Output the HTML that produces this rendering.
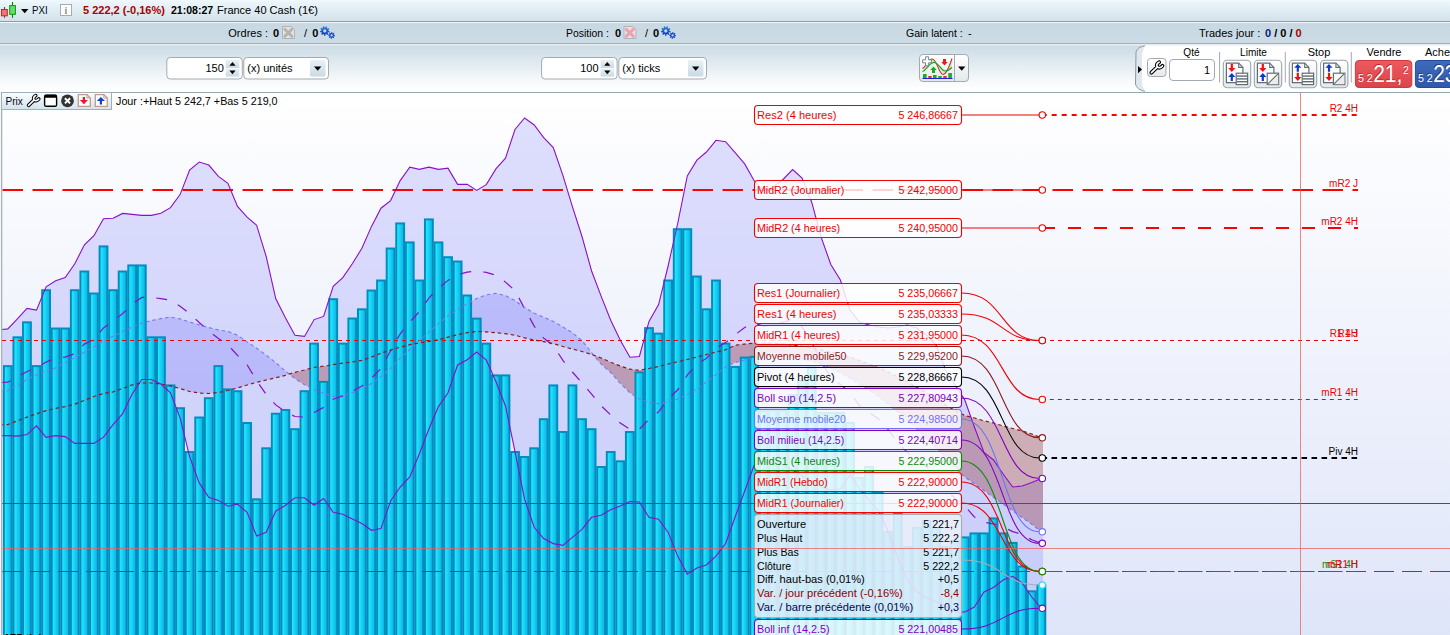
<!DOCTYPE html><html><head><meta charset="utf-8"><title>PXI</title>
<style>html,body{margin:0;padding:0;background:#fff}body{width:1450px;height:635px;overflow:hidden;font-family:'Liberation Sans', Arial, sans-serif}svg{display:block}text{font-family:'Liberation Sans', Arial, sans-serif}</style>
</head><body>
<svg width="1450" height="635" viewBox="0 0 1450 635" font-size="11">
<defs>
<linearGradient id="g1" x1="0" y1="0" x2="0" y2="1"><stop offset="0" stop-color="#eef8fd"/><stop offset="1" stop-color="#d2e1ea"/></linearGradient>
<linearGradient id="g2" x1="0" y1="0" x2="0" y2="1"><stop offset="0" stop-color="#c6d8e2"/><stop offset="1" stop-color="#ccdce6"/></linearGradient>
<linearGradient id="g3" x1="0" y1="0" x2="0" y2="1"><stop offset="0" stop-color="#cbdbe5"/><stop offset="0.75" stop-color="#f6f9fb"/><stop offset="1" stop-color="#ffffff"/></linearGradient>
<linearGradient id="gbg" x1="0" y1="0" x2="0" y2="1"><stop offset="0" stop-color="#ffffff"/><stop offset="1" stop-color="#dfe5f9"/></linearGradient>
<linearGradient id="gbar" x1="0" y1="0" x2="1" y2="0"><stop offset="0.1" stop-color="#22ecff"/><stop offset="0.9" stop-color="#0fb4e6"/></linearGradient>
<linearGradient id="gbtn" x1="0" y1="0" x2="0" y2="1"><stop offset="0" stop-color="#ffffff"/><stop offset="1" stop-color="#e4e9ec"/></linearGradient>
<linearGradient id="gtool" x1="0" y1="0" x2="0" y2="1"><stop offset="0" stop-color="#fbfdfe"/><stop offset="1" stop-color="#d3e3ec"/></linearGradient>
<linearGradient id="gsell" x1="0" y1="0" x2="0" y2="1"><stop offset="0" stop-color="#ee5a5e"/><stop offset="1" stop-color="#dc4449"/></linearGradient>
<linearGradient id="gbuy" x1="0" y1="0" x2="0" y2="1"><stop offset="0" stop-color="#3f6bbd"/><stop offset="1" stop-color="#2f58a8"/></linearGradient>
<linearGradient id="garrow" x1="0" y1="0" x2="0" y2="1"><stop offset="0" stop-color="#e9f1f6"/><stop offset="1" stop-color="#c9dae4"/></linearGradient>
<linearGradient id="ggear" x1="0" y1="0" x2="0" y2="1"><stop offset="0" stop-color="#2a80e4"/><stop offset="1" stop-color="#1030b0"/></linearGradient>
<clipPath id="chartclip"><rect x="2" y="93" width="1448" height="542"/></clipPath>
</defs>
<rect x="0" y="0" width="1450" height="21" fill="url(#g1)"/>
<rect x="0" y="21" width="1450" height="1" fill="#8f9aa1"/><rect x="0" y="22" width="1450" height="1" fill="#f4f8fa"/>
<rect x="0" y="23" width="1450" height="20.5" fill="url(#g2)"/>
<rect x="0" y="43.3" width="1450" height="1" fill="#8b969d"/><rect x="0" y="44.3" width="1450" height="1" fill="#eef3f6"/>
<rect x="0" y="45.3" width="1450" height="46.7" fill="url(#g3)"/>
<g><line x1="4.5" y1="7" x2="4.5" y2="17.8" stroke="#b82020" stroke-width="1.1"/><rect x="1.5" y="9.5" width="5.8" height="6.3" fill="#f27474" stroke="#c02828" stroke-width="1"/>
<line x1="12.5" y1="2" x2="12.5" y2="17.8" stroke="#108010" stroke-width="1.1"/><rect x="9.7" y="5.6" width="5.7" height="8.7" fill="#62e062" stroke="#149014" stroke-width="1"/></g>
<path d="M21,9 L28.4,9 L24.7,13.2 Z" fill="#000"/>
<text x="32" y="14.3" font-size="11" fill="#000820" textLength="15.6" lengthAdjust="spacingAndGlyphs">PXI</text>
<rect x="60.5" y="4.5" width="11" height="11" fill="#fff" stroke="#a9adb0" stroke-width="1"/>
<text x="66" y="13.6" font-size="10" font-weight="bold" text-anchor="middle" fill="#8a8f94" style="font-family:'Liberation Serif',serif">i</text>
<text x="83" y="14.3" font-size="11" font-weight="bold" fill="#a80000">5 222,2 (-0,16%)</text>
<text x="171" y="14.3" font-size="11" font-weight="bold" fill="#000" textLength="42.2" lengthAdjust="spacingAndGlyphs">21:08:27</text>
<text x="217" y="14.3" font-size="11" fill="#000">France 40 Cash (1€)</text>
<text x="228.3" y="37" font-size="11" fill="#000">Ordres :</text><text x="273" y="37" font-size="11" font-weight="bold" fill="#000">0</text>
<g><path d="M282.5,26.5 h9 l3,3 v9 h-12 z" fill="#e5e3df" stroke="#b6b3b0" stroke-width="1"/><path d="M284.8,29.3 l7,7 M291.8,29.3 l-7,7" stroke="#b4b4b4" stroke-width="3" stroke-linecap="round"/></g>
<text x="304" y="37" font-size="11" fill="#000">/</text><text x="312.2" y="37" font-size="11" font-weight="bold" fill="#000">0</text>
<path fill-rule="evenodd" fill="url(#ggear)" d="M329.59,31.12 L329.30,32.56 L328.01,32.29 L327.50,33.12 L328.33,34.15 L327.18,35.07 L326.36,34.03 L325.44,34.34 L325.41,35.66 L323.95,35.62 L323.99,34.30 L323.08,33.95 L322.21,34.94 L321.11,33.97 L321.99,32.98 L321.52,32.13 L320.22,32.33 L320.00,30.88 L321.31,30.69 L321.50,29.73 L320.37,29.05 L321.14,27.80 L322.26,28.49 L323.02,27.89 L322.60,26.64 L323.99,26.17 L324.40,27.42 L325.38,27.45 L325.85,26.22 L327.22,26.75 L326.73,27.98 L327.46,28.63 L328.62,27.99 L329.32,29.28 L328.16,29.90 L328.30,30.87 Z M323.20,30.90 a1.60,1.60 0 1,0 3.20,0 a1.60,1.60 0 1,0 -3.20,0 Z"/><path fill-rule="evenodd" fill="#1848c8" d="M334.99,35.15 L334.87,36.32 L333.87,36.19 L333.51,36.85 L334.17,37.62 L333.27,38.36 L332.64,37.56 L331.92,37.78 L331.85,38.79 L330.68,38.67 L330.81,37.67 L330.15,37.31 L329.38,37.97 L328.64,37.07 L329.44,36.44 L329.22,35.72 L328.21,35.65 L328.33,34.48 L329.33,34.61 L329.69,33.95 L329.03,33.18 L329.93,32.44 L330.56,33.24 L331.28,33.02 L331.35,32.01 L332.52,32.13 L332.39,33.13 L333.05,33.49 L333.82,32.83 L334.56,33.73 L333.76,34.36 L333.98,35.08 Z M330.45,35.40 a1.15,1.15 0 1,0 2.30,0 a1.15,1.15 0 1,0 -2.30,0 Z"/>
<text x="566" y="37" font-size="11" fill="#000" textLength="42.8" lengthAdjust="spacingAndGlyphs">Position :</text><text x="615" y="37" font-size="11" font-weight="bold" fill="#000">0</text>
<g><path d="M624,26.5 h9 l3,3 v9 h-12 z" fill="#dde4ea" stroke="#b6b3b0" stroke-width="1"/><path d="M626.3,29.3 l7,7 M633.3,29.3 l-7,7" stroke="#f0a0ac" stroke-width="3" stroke-linecap="round"/></g>
<text x="645" y="37" font-size="11" fill="#000">/</text><text x="653" y="37" font-size="11" font-weight="bold" fill="#000">0</text>
<path fill-rule="evenodd" fill="url(#ggear)" d="M670.59,31.12 L670.30,32.56 L669.01,32.29 L668.50,33.12 L669.33,34.15 L668.18,35.07 L667.36,34.03 L666.44,34.34 L666.41,35.66 L664.95,35.62 L664.99,34.30 L664.08,33.95 L663.21,34.94 L662.11,33.97 L662.99,32.98 L662.52,32.13 L661.22,32.33 L661.00,30.88 L662.31,30.69 L662.50,29.73 L661.37,29.05 L662.14,27.80 L663.26,28.49 L664.02,27.89 L663.60,26.64 L664.99,26.17 L665.40,27.42 L666.38,27.45 L666.85,26.22 L668.22,26.75 L667.73,27.98 L668.46,28.63 L669.62,27.99 L670.32,29.28 L669.16,29.90 L669.30,30.87 Z M664.20,30.90 a1.60,1.60 0 1,0 3.20,0 a1.60,1.60 0 1,0 -3.20,0 Z"/><path fill-rule="evenodd" fill="#1848c8" d="M675.99,35.15 L675.87,36.32 L674.87,36.19 L674.51,36.85 L675.17,37.62 L674.27,38.36 L673.64,37.56 L672.92,37.78 L672.85,38.79 L671.68,38.67 L671.81,37.67 L671.15,37.31 L670.38,37.97 L669.64,37.07 L670.44,36.44 L670.22,35.72 L669.21,35.65 L669.33,34.48 L670.33,34.61 L670.69,33.95 L670.03,33.18 L670.93,32.44 L671.56,33.24 L672.28,33.02 L672.35,32.01 L673.52,32.13 L673.39,33.13 L674.05,33.49 L674.82,32.83 L675.56,33.73 L674.76,34.36 L674.98,35.08 Z M671.45,35.40 a1.15,1.15 0 1,0 2.30,0 a1.15,1.15 0 1,0 -2.30,0 Z"/>
<text x="906" y="37" font-size="11" fill="#000" textLength="56.7" lengthAdjust="spacingAndGlyphs">Gain latent :</text><text x="968" y="37" font-size="11" fill="#000">-</text>
<text x="1199" y="37" font-size="11" fill="#000">Trades jour :</text>
<text x="1265" y="37" font-size="11" font-weight="bold"><tspan fill="#0a1a78">0</tspan><tspan fill="#000"> / </tspan><tspan fill="#000">0</tspan><tspan fill="#000"> / </tspan><tspan fill="#a80000">0</tspan></text>
<rect x="166.8" y="57.5" width="75.5" height="21.5" rx="3.5" fill="#fff" stroke="#a2abb2" stroke-width="1"/><text x="223.8" y="72.3" font-size="11" text-anchor="end" fill="#000">150</text><rect x="225.8" y="60" width="13.5" height="8" fill="url(#garrow)"/><rect x="225.8" y="68.6" width="13.5" height="8" fill="url(#garrow)"/><path d="M229.4,65.7 l3.1,-3.6 l3.1,3.6 z M229.4,70.6 l3.1,3.6 l3.1,-3.6 z" fill="#000"/>
<rect x="243.8" y="57.5" width="84.7" height="21.5" rx="3.5" fill="#fff" stroke="#a2abb2" stroke-width="1"/><text x="247.3" y="72.3" font-size="11" fill="#000">(x) unités</text><rect x="310" y="60" width="15.5" height="16.5" rx="1.5" fill="url(#garrow)"/><path d="M314,66.5 h7.4 l-3.7,4.2 z" fill="#000"/>
<rect x="541.6" y="57.5" width="75.5" height="21.5" rx="3.5" fill="#fff" stroke="#a2abb2" stroke-width="1"/><text x="598.6" y="72.3" font-size="11" text-anchor="end" fill="#000">100</text><rect x="600.6" y="60" width="13.5" height="8" fill="url(#garrow)"/><rect x="600.6" y="68.6" width="13.5" height="8" fill="url(#garrow)"/><path d="M604.2,65.7 l3.1,-3.6 l3.1,3.6 z M604.2,70.6 l3.1,3.6 l3.1,-3.6 z" fill="#000"/>
<rect x="618.8" y="57.5" width="87.7" height="21.5" rx="3.5" fill="#fff" stroke="#a2abb2" stroke-width="1"/><text x="622.3" y="72.3" font-size="11" fill="#000">(x) ticks</text><rect x="688" y="60" width="15.5" height="16.5" rx="1.5" fill="url(#garrow)"/><path d="M692,66.5 h7.4 l-3.7,4.2 z" fill="#000"/>
<rect x="919.5" y="54.5" width="49" height="27" rx="3.5" fill="url(#gbtn)" stroke="#a2abb2"/><line x1="954.5" y1="55" x2="954.5" y2="81" stroke="#a2abb2"/>
<path d="M958,66.5 h7.4 l-3.7,4.2 z" fill="#000"/>
<g>
<path d="M922.5,70 C927,66 929,60 933,60 C938,60 940,74 944,74 C948,74 950,64 952,59 L952,68 C949,72 947,71 945,70 C940,66 938,62 933,64 C929,66 927,70 922.5,70 Z" fill="#c8ecc8" opacity="0.9"/>
<path d="M922.5,68.5 C926,67 928,59 932,59 C937,59 939,74.5 943,74.5 C947,74.5 950,64 952,58.5" fill="none" stroke="#d02828" stroke-width="1.1"/>
<path d="M922.5,71.5 C927,70 929,62.5 934,62.5 C939,62.5 941,71 945,71 C948,71 950,69.5 952,67.5" fill="none" stroke="#18a018" stroke-width="1.1"/>
<path d="M925.6,56.8 h3 v3 h3 v3 h-3 v3 h-3 v-3 h-3 v-3 h3 z" fill="#fff" stroke="#6f7a80" stroke-width="0.9"/>
<path d="M943,59 h3 v3 h1.8 l-3.3,3.4 l-3.3,-3.4 h1.8 z" fill="#e02020"/>
<path d="M932,73 v-3 h-1.8 l3.3,-3.4 l3.3,3.4 h-1.8 v3 z" fill="#18b018"/>
<rect x="923" y="74" width="3.6" height="4" fill="#18b018"/><rect x="928.3" y="76" width="3.4" height="2" fill="#e03030"/><rect x="933" y="75" width="3.6" height="3" fill="#18b018"/><rect x="938.3" y="76" width="3.4" height="2" fill="#18b018"/><rect x="943.3" y="76" width="3.4" height="2" fill="#e03030"/><rect x="948.3" y="73" width="3.6" height="5" fill="#18b018"/>
<line x1="922.5" y1="78.5" x2="952.5" y2="78.5" stroke="#2020e0" stroke-width="1"/>
</g>
<path d="M1450,45.5 L1145,45.5 C1140,46 1137,48 1136,52 L1135.5,84 C1137,88 1140,90.5 1145,91.5 L1450,91.5 Z" fill="#fff"/>
<path d="M1145,45.8 C1140,46.5 1136.8,48.5 1136,52.5 L1135.5,84 C1136.5,88 1140,90.5 1145,91.3" fill="#dfe8ee" stroke="#8b969d" stroke-width="1"/>
<path d="M1145,45.8 C1142.5,50 1142,54 1142,58 L1142,80 C1142,84 1142.5,87 1145,91.3 L1450,91.3 L1450,45.8 Z" fill="#fff"/>
<path d="M1138,66 l4,3.6 l-4,3.6 z" fill="#000"/>
<rect x="1147.5" y="58.5" width="18.5" height="18" rx="3" fill="url(#gbtn)" stroke="#a2abb2"/>
<g transform="translate(1149.5,60.3) scale(1)" fill="none" stroke-linecap="round" stroke-linejoin="round"><path d="M1.9,12.4 L7.9,6.5 M9.6,1.9 C7.4,2.9 6.6,5.2 7.9,6.6 C9.2,8 11.5,7.4 12.9,5.6" stroke="#000" stroke-width="3.9"/><path d="M1.9,12.4 L7.9,6.5 M9.6,1.9 C7.4,2.9 6.6,5.2 7.9,6.6 C9.2,8 11.5,7.4 12.9,5.6" stroke="#fff" stroke-width="1.7"/></g>
<text x="1191.5" y="56.3" font-size="11" text-anchor="middle" fill="#000" textLength="16.3" lengthAdjust="spacingAndGlyphs">Qté</text>
<rect x="1169.5" y="59.5" width="45" height="21" rx="3.5" fill="#fff" stroke="#a2abb2"/><text x="1210" y="73.6" font-size="11" text-anchor="end" fill="#000">1</text>
<line x1="1219.6" y1="52" x2="1219.6" y2="82.5" stroke="#a2abb2" stroke-width="1"/>
<line x1="1285.3" y1="52" x2="1285.3" y2="82.5" stroke="#a2abb2" stroke-width="1"/>
<line x1="1351.3" y1="52" x2="1351.3" y2="82.5" stroke="#a2abb2" stroke-width="1"/>
<text x="1253.5" y="56.3" font-size="11" text-anchor="middle" fill="#000" textLength="26.8" lengthAdjust="spacingAndGlyphs">Limite</text>
<text x="1319" y="56.3" font-size="11" text-anchor="middle" fill="#000">Stop</text>
<text x="1384" y="56.3" font-size="11" text-anchor="middle" fill="#000">Vendre</text>
<text x="1425" y="56.3" font-size="11" fill="#000">Acheter</text>
<rect x="1223.3" y="60.3" width="27.4" height="27.4" rx="4" fill="url(#gbtn)" stroke="#9aa5ac" stroke-width="1.1"/><path d="M1226.4,63.2 h12.3 l4.2,4.2 v15.3 h-16.5 z" fill="#fff" stroke="#626d72" stroke-width="1.2"/><path d="M1238.7,63.2 v4.2 h4.2" fill="none" stroke="#626d72" stroke-width="1.1"/><path d="M1230.7,63.9 h2.2 v4.2 h2.5 l-3.6,4 l-3.6,-4 h2.5 z" fill="#f01010"/><path d="M1231.8,73.1 l3.6,3.9 h-2.5 v4 h-2.2 v-4 h-2.5 z" fill="#0a3cc8"/><rect x="1236.2" y="73.2" width="11.4" height="11.4" fill="#fff" stroke="#626d72" stroke-width="1.2"/><rect x="1236.7" y="75.4" width="10.4" height="1.4" fill="#626d72"/><rect x="1236.7" y="78.2" width="10.4" height="1.4" fill="#626d72"/><rect x="1236.7" y="81" width="10.4" height="1.4" fill="#626d72"/>
<rect x="1254.3" y="60.3" width="27.4" height="27.4" rx="4" fill="url(#gbtn)" stroke="#9aa5ac" stroke-width="1.1"/><path d="M1257.4,63.2 h12.3 l4.2,4.2 v15.3 h-16.5 z" fill="#fff" stroke="#626d72" stroke-width="1.2"/><path d="M1269.7,63.2 v4.2 h4.2" fill="none" stroke="#626d72" stroke-width="1.1"/><path d="M1261.7,63.9 h2.2 v4.2 h2.5 l-3.6,4 l-3.6,-4 h2.5 z" fill="#f01010"/><path d="M1262.8,73.1 l3.6,3.9 h-2.5 v4 h-2.2 v-4 h-2.5 z" fill="#0a3cc8"/><rect x="1267.2" y="73.2" width="11.4" height="11.4" fill="#fafafa" stroke="#626d72" stroke-width="1.2"/><path d="M1278.2,73.6 l-10.6,10.6 h10.6 z" fill="#ececec"/><line x1="1278.2" y1="73.6" x2="1267.6" y2="84.2" stroke="#626d72" stroke-width="1.1"/>
<rect x="1289.3" y="60.3" width="27.4" height="27.4" rx="4" fill="url(#gbtn)" stroke="#9aa5ac" stroke-width="1.1"/><path d="M1292.4,63.2 h12.3 l4.2,4.2 v15.3 h-16.5 z" fill="#fff" stroke="#626d72" stroke-width="1.2"/><path d="M1304.7,63.2 v4.2 h4.2" fill="none" stroke="#626d72" stroke-width="1.1"/><path d="M1297.8,63.9 l3.6,3.9 h-2.5 v4 h-2.2 v-4 h-2.5 z" fill="#0a3cc8"/><path d="M1296.7,72.7 h2.2 v4.2 h2.5 l-3.6,4 l-3.6,-4 h2.5 z" fill="#f01010"/><rect x="1302.2" y="73.2" width="11.4" height="11.4" fill="#fff" stroke="#626d72" stroke-width="1.2"/><rect x="1302.7" y="75.4" width="10.4" height="1.4" fill="#626d72"/><rect x="1302.7" y="78.2" width="10.4" height="1.4" fill="#626d72"/><rect x="1302.7" y="81" width="10.4" height="1.4" fill="#626d72"/>
<rect x="1320.5" y="60.3" width="27.4" height="27.4" rx="4" fill="url(#gbtn)" stroke="#9aa5ac" stroke-width="1.1"/><path d="M1323.6,63.2 h12.3 l4.2,4.2 v15.3 h-16.5 z" fill="#fff" stroke="#626d72" stroke-width="1.2"/><path d="M1335.9,63.2 v4.2 h4.2" fill="none" stroke="#626d72" stroke-width="1.1"/><path d="M1329,63.9 l3.6,3.9 h-2.5 v4 h-2.2 v-4 h-2.5 z" fill="#0a3cc8"/><path d="M1327.9,72.7 h2.2 v4.2 h2.5 l-3.6,4 l-3.6,-4 h2.5 z" fill="#f01010"/><rect x="1333.4" y="73.2" width="11.4" height="11.4" fill="#fafafa" stroke="#626d72" stroke-width="1.2"/><path d="M1344.4,73.6 l-10.6,10.6 h10.6 z" fill="#ececec"/><line x1="1344.4" y1="73.6" x2="1333.8" y2="84.2" stroke="#626d72" stroke-width="1.1"/>
<rect x="1355.4" y="60.5" width="56.4" height="27" rx="3.5" fill="url(#gsell)" stroke="#cc3a42" stroke-width="1"/>
<g fill="#a81820" opacity="0.7" transform="translate(-0.7,-0.7)"><text x="1358" y="81.9" font-size="11.5" textLength="14.8" lengthAdjust="spacingAndGlyphs">5 2</text><text x="1373.2" y="82" font-size="23.6" textLength="29" lengthAdjust="spacingAndGlyphs">21,</text><text x="1402.9" y="73.9" font-size="11.2" textLength="5.7" lengthAdjust="spacingAndGlyphs">2</text></g><g fill="#fff" opacity="1" transform="translate(0,0)"><text x="1358" y="81.9" font-size="11.5" textLength="14.8" lengthAdjust="spacingAndGlyphs">5 2</text><text x="1373.2" y="82" font-size="23.6" textLength="29" lengthAdjust="spacingAndGlyphs">21,</text><text x="1402.9" y="73.9" font-size="11.2" textLength="5.7" lengthAdjust="spacingAndGlyphs">2</text></g>
<rect x="1415.4" y="60.5" width="56.4" height="27" rx="3.5" fill="url(#gbuy)" stroke="#284c98" stroke-width="1"/>
<g fill="#18306c" opacity="0.7" transform="translate(-0.7,-0.7)"><text x="1418" y="81.9" font-size="11.5" textLength="14.8" lengthAdjust="spacingAndGlyphs">5 2</text><text x="1433.2" y="82" font-size="23.6" textLength="29" lengthAdjust="spacingAndGlyphs">23,</text></g><g fill="#fff" opacity="1" transform="translate(0,0)"><text x="1418" y="81.9" font-size="11.5" textLength="14.8" lengthAdjust="spacingAndGlyphs">5 2</text><text x="1433.2" y="82" font-size="23.6" textLength="29" lengthAdjust="spacingAndGlyphs">23,</text></g>
<rect x="0" y="92" width="1450" height="543" fill="url(#gbg)"/>
<g clip-path="url(#chartclip)">
<polygon points="0.0,329.7 7.8,328.9 17.4,318.9 27.0,308.4 36.5,310.1 46.1,286.8 55.7,280.8 65.2,277.6 74.8,263.8 84.4,244.8 93.9,235.7 103.5,218.7 113.1,218.2 122.7,213.4 132.2,214.4 141.8,215.4 151.4,215.4 160.9,213.2 170.5,207.7 180.1,194.6 189.6,170.1 199.2,162.1 208.8,165.1 218.4,176.4 227.9,183.4 237.5,206.4 247.1,217.2 256.6,225.2 266.2,256.5 275.8,298.8 285.3,317.6 294.9,335.2 304.5,336.4 314.1,319.6 323.6,316.4 333.2,286.3 342.8,277.6 352.3,263.8 361.9,248.3 371.5,226.4 381.0,208.2 390.6,200.6 400.2,180.6 409.8,167.1 419.3,169.4 428.9,167.1 438.5,169.4 448.0,168.1 457.6,184.4 467.2,184.4 476.7,190.4 486.3,184.6 495.9,168.9 505.5,158.1 515.0,129.5 524.6,118.0 534.2,125.0 543.7,137.6 553.3,147.6 562.9,175.4 572.4,206.7 582.0,236.5 591.6,271.0 601.2,296.4 610.7,320.2 620.3,340.2 629.9,357.2 639.4,356.5 649.0,321.4 658.6,304.6 668.1,266.0 677.7,223.5 687.3,176.0 696.9,160.1 706.4,152.0 716.0,140.3 725.6,141.7 735.1,152.6 744.7,163.9 754.3,180.9 763.8,190.8 773.4,186.6 783.0,179.5 792.6,169.6 802.1,178.1 811.7,202.2 821.3,237.6 830.8,264.5 840.4,280.0 850.0,310.0 859.5,322.0 869.1,325.0 878.7,327.0 888.3,328.0 897.8,327.0 907.4,325.0 917.0,328.0 926.5,335.0 936.1,345.0 945.7,370.0 955.2,385.0 964.8,400.0 974.4,427.0 984.0,452.5 993.5,460.0 1003.1,474.0 1012.7,487.0 1022.2,486.0 1031.8,482.5 1041.4,478.5 1043.0,478.5 1043.0,608.3 1041.4,608.3 1031.8,597.0 1022.2,583.0 1012.7,576.3 1003.1,580.0 993.5,587.5 984.0,592.0 974.4,607.0 964.8,612.0 955.2,612.0 945.7,606.0 936.1,601.5 926.5,598.0 917.0,592.0 907.4,580.0 897.8,558.0 888.3,532.0 878.7,511.0 869.1,500.0 859.5,489.0 850.0,475.0 840.4,489.0 830.8,490.0 821.3,487.0 811.7,482.0 802.1,476.0 792.6,470.0 783.0,465.0 773.4,462.0 763.8,462.0 754.3,465.0 744.7,491.0 735.1,517.0 725.6,543.5 716.0,556.1 706.4,564.9 696.9,568.1 687.3,574.1 677.7,556.1 668.1,532.3 658.6,519.3 649.0,517.3 639.4,502.0 629.9,501.5 620.3,506.0 610.7,509.8 601.2,515.3 591.6,517.3 582.0,529.3 572.4,537.3 562.9,545.4 553.3,543.6 543.7,538.6 534.2,527.3 524.6,499.2 515.0,451.6 505.5,406.0 495.9,381.5 486.3,360.2 476.7,352.0 467.2,359.7 457.6,365.0 448.0,392.8 438.5,406.6 428.9,429.0 419.3,454.0 409.8,477.0 400.2,487.0 390.6,501.0 381.0,528.6 371.5,530.3 361.9,523.6 352.3,519.0 342.8,514.3 333.2,512.3 323.6,498.5 314.1,505.3 304.5,497.8 294.9,497.8 285.3,505.5 275.8,511.0 266.2,532.3 256.6,536.0 247.1,512.3 237.5,504.2 227.9,506.2 218.4,500.4 208.8,497.2 199.2,482.9 189.6,456.6 180.1,417.8 170.5,392.8 160.9,384.0 151.4,379.5 141.8,379.5 132.2,394.0 122.7,413.6 113.1,424.6 103.5,437.1 93.9,443.4 84.4,443.4 74.8,443.4 65.2,436.6 55.7,435.6 46.1,437.4 36.5,425.8 27.0,434.6 17.4,436.1 7.8,435.6 0.0,435.6" fill="#6464f8" fill-opacity="0.2"/>
<polygon points="0.0,391.1 7.8,390.7 17.4,385.2 27.0,379.5 36.5,374.7 46.1,371.5 55.7,367.7 65.2,362.7 74.8,357.7 84.4,352.2 93.9,346.9 103.5,341.4 113.1,336.2 122.7,331.4 132.2,327.1 141.8,323.1 151.4,320.6 160.9,318.6 170.5,317.1 180.1,318.9 189.6,321.9 199.2,324.9 208.8,327.6 218.4,329.9 227.9,331.4 237.5,335.2 247.1,341.9 256.6,348.2 266.2,355.2 275.8,362.7 285.3,371.0 289.3,374.1 289.3,374.1 285.3,375.3 275.8,377.8 266.2,380.0 256.6,382.3 247.1,385.0 237.5,388.0 227.9,390.5 218.4,392.5 208.8,393.5 199.2,393.0 189.6,391.5 180.1,388.5 170.5,386.0 160.9,384.0 151.4,383.0 141.8,383.0 132.2,384.8 122.7,388.5 113.1,391.8 103.5,393.5 93.9,396.5 84.4,400.3 74.8,404.1 65.2,406.6 55.7,408.3 46.1,410.6 36.5,413.8 27.0,417.1 17.4,420.8 7.8,424.6 0.0,424.9" fill="#6464f8" fill-opacity="0.24"/>
<polygon points="289.3,374.1 294.9,378.5 304.5,384.7 314.1,389.3 323.6,393.5 333.2,396.5 342.8,395.3 352.3,392.8 361.9,388.3 371.5,383.5 381.0,376.5 390.6,368.5 400.2,358.2 409.8,349.5 416.2,343.6 416.2,343.6 409.8,344.7 400.2,347.2 390.6,350.0 381.0,353.2 371.5,357.0 361.9,360.4 352.3,361.9 342.8,363.2 333.2,364.7 323.6,366.2 314.1,367.4 304.5,370.0 294.9,372.3 289.3,374.1" fill="#8c1818" fill-opacity="0.3"/>
<polygon points="416.2,343.6 419.3,340.7 428.9,332.2 438.5,323.7 448.0,315.9 457.6,309.6 467.2,303.6 476.7,298.4 486.3,294.9 495.9,293.4 505.5,295.6 515.0,300.6 524.6,307.6 534.2,313.2 543.7,317.2 553.3,321.4 562.9,326.9 572.4,332.7 582.0,340.7 591.6,352.7 593.7,355.3 593.7,355.3 591.6,354.5 582.0,351.5 572.4,349.0 562.9,346.5 553.3,343.5 543.7,341.7 534.2,340.0 524.6,337.9 515.0,335.2 505.5,333.7 495.9,332.7 486.3,331.9 476.7,331.4 467.2,332.7 457.6,334.7 448.0,337.2 438.5,339.7 428.9,341.4 419.3,343.0 416.2,343.6" fill="#6464f8" fill-opacity="0.24"/>
<polygon points="593.7,355.3 601.2,364.2 610.7,372.5 620.3,383.3 629.9,392.8 639.4,399.0 649.0,402.3 658.6,403.6 668.1,402.0 677.7,399.0 687.3,394.5 696.9,389.0 706.4,382.0 716.0,374.5 725.6,367.0 735.1,362.5 744.7,360.0 754.3,358.0 763.8,356.5 773.4,356.0 783.0,356.0 792.6,357.0 802.1,359.0 811.7,361.0 821.3,364.0 830.8,368.0 840.4,373.0 850.0,378.0 859.5,384.0 869.1,390.0 878.7,397.0 888.3,404.0 897.8,412.0 907.4,420.0 917.0,429.0 926.5,438.0 936.1,448.0 945.7,458.0 955.2,468.0 964.8,477.0 974.4,483.8 984.0,490.5 993.5,497.3 1003.1,504.0 1012.7,510.8 1022.2,517.5 1031.8,524.3 1041.4,531.8 1043.0,531.8 1043.0,437.8 1041.4,437.8 1031.8,434.0 1022.2,431.0 1012.7,428.5 1003.1,426.0 993.5,423.0 984.0,420.8 974.4,418.0 964.8,415.5 955.2,410.5 945.7,405.0 936.1,399.0 926.5,393.0 917.0,387.5 907.4,382.0 897.8,377.0 888.3,372.0 878.7,368.0 869.1,364.0 859.5,360.5 850.0,357.0 840.4,354.5 830.8,352.0 821.3,350.0 811.7,348.0 802.1,346.5 792.6,345.0 783.0,344.0 773.4,343.0 763.8,343.0 754.3,343.1 744.7,344.1 735.1,345.3 725.6,349.7 716.0,352.0 706.4,354.5 696.9,357.0 687.3,359.5 677.7,361.7 668.1,364.0 658.6,366.5 649.0,368.5 639.4,370.3 629.9,369.2 620.3,366.0 610.7,362.2 601.2,358.0 593.7,355.3" fill="#8c1818" fill-opacity="0.3"/>
<g fill="url(#gbar)" stroke="#008cbe" stroke-width="1.95"><rect x="3.88" y="366.1" width="7.87" height="274.8"/><rect x="13.45" y="337.3" width="7.87" height="303.6"/><rect x="23.02" y="322.3" width="7.87" height="318.6"/><rect x="32.59" y="366.1" width="7.87" height="274.8"/><rect x="42.16" y="290.2" width="7.87" height="350.7"/><rect x="51.73" y="328.5" width="7.87" height="312.4"/><rect x="61.30" y="328.5" width="7.87" height="312.4"/><rect x="70.87" y="290.2" width="7.87" height="350.7"/><rect x="80.44" y="271.5" width="7.87" height="369.4"/><rect x="90.01" y="293.5" width="7.87" height="347.4"/><rect x="99.58" y="246.4" width="7.87" height="394.5"/><rect x="109.15" y="290.2" width="7.87" height="350.7"/><rect x="118.72" y="271.5" width="7.87" height="369.4"/><rect x="128.29" y="265.4" width="7.87" height="375.5"/><rect x="137.86" y="265.4" width="7.87" height="375.5"/><rect x="147.43" y="337.3" width="7.87" height="303.6"/><rect x="157.00" y="337.3" width="7.87" height="303.6"/><rect x="166.57" y="385.4" width="7.87" height="255.5"/><rect x="176.14" y="408.2" width="7.87" height="232.7"/><rect x="185.71" y="452.0" width="7.87" height="188.9"/><rect x="195.28" y="417.5" width="7.87" height="223.4"/><rect x="204.85" y="398.2" width="7.87" height="242.7"/><rect x="214.42" y="366.1" width="7.87" height="274.8"/><rect x="223.99" y="389.4" width="7.87" height="251.5"/><rect x="233.56" y="391.2" width="7.87" height="249.7"/><rect x="243.13" y="423.0" width="7.87" height="217.9"/><rect x="252.70" y="499.3" width="7.87" height="141.6"/><rect x="262.27" y="448.3" width="7.87" height="192.6"/><rect x="271.84" y="413.7" width="7.87" height="227.2"/><rect x="281.41" y="410.0" width="7.87" height="230.9"/><rect x="290.98" y="429.2" width="7.87" height="211.7"/><rect x="300.55" y="391.2" width="7.87" height="249.7"/><rect x="310.12" y="343.6" width="7.87" height="297.3"/><rect x="319.69" y="381.9" width="7.87" height="259.0"/><rect x="329.26" y="299.2" width="7.87" height="341.7"/><rect x="338.83" y="343.6" width="7.87" height="297.3"/><rect x="348.40" y="318.5" width="7.87" height="322.4"/><rect x="357.97" y="309.3" width="7.87" height="331.6"/><rect x="367.54" y="290.5" width="7.87" height="350.4"/><rect x="377.11" y="280.5" width="7.87" height="360.4"/><rect x="386.68" y="248.5" width="7.87" height="392.4"/><rect x="396.25" y="223.4" width="7.87" height="417.5"/><rect x="405.82" y="242.4" width="7.87" height="398.5"/><rect x="415.39" y="280.5" width="7.87" height="360.4"/><rect x="424.96" y="219.4" width="7.87" height="421.5"/><rect x="434.53" y="242.4" width="7.87" height="398.5"/><rect x="444.10" y="257.2" width="7.87" height="383.7"/><rect x="453.67" y="261.5" width="7.87" height="379.4"/><rect x="463.24" y="295.5" width="7.87" height="345.4"/><rect x="472.81" y="318.6" width="7.87" height="322.3"/><rect x="482.38" y="343.6" width="7.87" height="297.3"/><rect x="491.95" y="375.4" width="7.87" height="265.5"/><rect x="501.52" y="375.4" width="7.87" height="265.5"/><rect x="511.09" y="452.0" width="7.87" height="188.9"/><rect x="520.66" y="457.0" width="7.87" height="183.9"/><rect x="530.23" y="448.3" width="7.87" height="192.6"/><rect x="539.80" y="419.2" width="7.87" height="221.7"/><rect x="549.37" y="385.4" width="7.87" height="255.5"/><rect x="558.94" y="432.0" width="7.87" height="208.9"/><rect x="568.51" y="385.4" width="7.87" height="255.5"/><rect x="578.08" y="419.2" width="7.87" height="221.7"/><rect x="587.65" y="429.2" width="7.87" height="211.7"/><rect x="597.22" y="467.0" width="7.87" height="173.9"/><rect x="606.79" y="452.0" width="7.87" height="188.9"/><rect x="616.36" y="461.3" width="7.87" height="179.6"/><rect x="625.93" y="432.0" width="7.87" height="208.9"/><rect x="635.50" y="372.4" width="7.87" height="268.5"/><rect x="645.07" y="328.1" width="7.87" height="312.8"/><rect x="654.64" y="333.6" width="7.87" height="307.3"/><rect x="664.21" y="280.5" width="7.87" height="360.4"/><rect x="673.78" y="229.2" width="7.87" height="411.7"/><rect x="683.35" y="229.2" width="7.87" height="411.7"/><rect x="692.92" y="276.5" width="7.87" height="364.4"/><rect x="702.49" y="309.3" width="7.87" height="331.6"/><rect x="712.06" y="280.5" width="7.87" height="360.4"/><rect x="721.63" y="343.6" width="7.87" height="297.3"/><rect x="731.20" y="366.9" width="7.87" height="274.0"/><rect x="740.77" y="357.6" width="7.87" height="283.3"/><rect x="750.34" y="356.9" width="7.87" height="284.0"/><rect x="759.91" y="410.9" width="7.87" height="230.0"/><rect x="769.48" y="410.9" width="7.87" height="230.0"/><rect x="779.05" y="410.9" width="7.87" height="230.0"/><rect x="788.62" y="394.9" width="7.87" height="246.0"/><rect x="798.19" y="380.9" width="7.87" height="260.0"/><rect x="807.76" y="367.9" width="7.87" height="273.0"/><rect x="817.33" y="412.9" width="7.87" height="228.0"/><rect x="826.90" y="412.9" width="7.87" height="228.0"/><rect x="836.47" y="412.9" width="7.87" height="228.0"/><rect x="846.04" y="422.9" width="7.87" height="218.0"/><rect x="855.61" y="477.9" width="7.87" height="163.0"/><rect x="865.18" y="466.9" width="7.87" height="174.0"/><rect x="874.75" y="491.9" width="7.87" height="149.0"/><rect x="884.32" y="531.9" width="7.87" height="109.0"/><rect x="893.89" y="512.9" width="7.87" height="128.0"/><rect x="903.46" y="546.9" width="7.87" height="94.0"/><rect x="913.03" y="527.9" width="7.87" height="113.0"/><rect x="922.60" y="520.9" width="7.87" height="120.0"/><rect x="932.17" y="527.9" width="7.87" height="113.0"/><rect x="941.74" y="546.9" width="7.87" height="94.0"/><rect x="951.31" y="540.9" width="7.87" height="100.0"/><rect x="960.88" y="537.4" width="7.87" height="103.5"/><rect x="970.45" y="533.4" width="7.87" height="107.5"/><rect x="980.02" y="533.4" width="7.87" height="107.5"/><rect x="989.59" y="518.4" width="7.87" height="122.5"/><rect x="999.16" y="533.4" width="7.87" height="107.5"/><rect x="1008.73" y="542.9" width="7.87" height="98.0"/><rect x="1018.30" y="566.5" width="7.87" height="74.4"/><rect x="1027.87" y="591.3" width="7.87" height="49.6"/><rect x="1037.44" y="585.4" width="7.87" height="55.5"/></g>
<line x1="2" y1="340.5" x2="1358" y2="340.5" stroke="#f00000" stroke-width="1" stroke-dasharray="4 4"/>
<line x1="2.5" y1="190" x2="1358" y2="190" stroke="#ff0000" stroke-width="2.1" stroke-dasharray="20.5 9.5"/>
<line x1="0" y1="503.5" x2="1450" y2="503.5" stroke="#e81010" stroke-width="1"/>
<line x1="2" y1="571.5" x2="1450" y2="571.5" stroke="#e81010" stroke-width="1" stroke-dasharray="20 8"/>
<line x1="1042.6" y1="571.5" x2="1358" y2="571.5" stroke="#109010" stroke-width="1" stroke-dasharray="20 8"/>
<line x1="1041.7" y1="115" x2="1358" y2="115" stroke="#ff0000" stroke-width="2" stroke-dasharray="5 5"/>
<line x1="1042" y1="228" x2="1358" y2="228" stroke="#ff0000" stroke-width="2" stroke-dasharray="13 13"/>
<line x1="1041.8" y1="399.5" x2="1358" y2="399.5" stroke="#f00000" stroke-width="1" stroke-dasharray="4 4"/>
<line x1="1041.5" y1="458" x2="1358" y2="458" stroke="#000" stroke-width="2" stroke-dasharray="5.6 4.4"/>
<polyline points="0.0,329.7 7.8,328.9 17.4,318.9 27.0,308.4 36.5,310.1 46.1,286.8 55.7,280.8 65.2,277.6 74.8,263.8 84.4,244.8 93.9,235.7 103.5,218.7 113.1,218.2 122.7,213.4 132.2,214.4 141.8,215.4 151.4,215.4 160.9,213.2 170.5,207.7 180.1,194.6 189.6,170.1 199.2,162.1 208.8,165.1 218.4,176.4 227.9,183.4 237.5,206.4 247.1,217.2 256.6,225.2 266.2,256.5 275.8,298.8 285.3,317.6 294.9,335.2 304.5,336.4 314.1,319.6 323.6,316.4 333.2,286.3 342.8,277.6 352.3,263.8 361.9,248.3 371.5,226.4 381.0,208.2 390.6,200.6 400.2,180.6 409.8,167.1 419.3,169.4 428.9,167.1 438.5,169.4 448.0,168.1 457.6,184.4 467.2,184.4 476.7,190.4 486.3,184.6 495.9,168.9 505.5,158.1 515.0,129.5 524.6,118.0 534.2,125.0 543.7,137.6 553.3,147.6 562.9,175.4 572.4,206.7 582.0,236.5 591.6,271.0 601.2,296.4 610.7,320.2 620.3,340.2 629.9,357.2 639.4,356.5 649.0,321.4 658.6,304.6 668.1,266.0 677.7,223.5 687.3,176.0 696.9,160.1 706.4,152.0 716.0,140.3 725.6,141.7 735.1,152.6 744.7,163.9 754.3,180.9 763.8,190.8 773.4,186.6 783.0,179.5 792.6,169.6 802.1,178.1 811.7,202.2 821.3,237.6 830.8,264.5 840.4,280.0 850.0,310.0 859.5,322.0 869.1,325.0 878.7,327.0 888.3,328.0 897.8,327.0 907.4,325.0 917.0,328.0 926.5,335.0 936.1,345.0 945.7,370.0 955.2,385.0 964.8,400.0 974.4,427.0 984.0,452.5 993.5,460.0 1003.1,474.0 1012.7,487.0 1022.2,486.0 1031.8,482.5 1041.4,478.5 1043.0,478.5" fill="none" stroke="#8a10c8" stroke-width="1.1"/>
<polyline points="0.0,435.6 7.8,435.6 17.4,436.1 27.0,434.6 36.5,425.8 46.1,437.4 55.7,435.6 65.2,436.6 74.8,443.4 84.4,443.4 93.9,443.4 103.5,437.1 113.1,424.6 122.7,413.6 132.2,394.0 141.8,379.5 151.4,379.5 160.9,384.0 170.5,392.8 180.1,417.8 189.6,456.6 199.2,482.9 208.8,497.2 218.4,500.4 227.9,506.2 237.5,504.2 247.1,512.3 256.6,536.0 266.2,532.3 275.8,511.0 285.3,505.5 294.9,497.8 304.5,497.8 314.1,505.3 323.6,498.5 333.2,512.3 342.8,514.3 352.3,519.0 361.9,523.6 371.5,530.3 381.0,528.6 390.6,501.0 400.2,487.0 409.8,477.0 419.3,454.0 428.9,429.0 438.5,406.6 448.0,392.8 457.6,365.0 467.2,359.7 476.7,352.0 486.3,360.2 495.9,381.5 505.5,406.0 515.0,451.6 524.6,499.2 534.2,527.3 543.7,538.6 553.3,543.6 562.9,545.4 572.4,537.3 582.0,529.3 591.6,517.3 601.2,515.3 610.7,509.8 620.3,506.0 629.9,501.5 639.4,502.0 649.0,517.3 658.6,519.3 668.1,532.3 677.7,556.1 687.3,574.1 696.9,568.1 706.4,564.9 716.0,556.1 725.6,543.5 735.1,517.0 744.7,491.0 754.3,465.0 763.8,462.0 773.4,462.0 783.0,465.0 792.6,470.0 802.1,476.0 811.7,482.0 821.3,487.0 830.8,490.0 840.4,489.0 850.0,475.0 859.5,489.0 869.1,500.0 878.7,511.0 888.3,532.0 897.8,558.0 907.4,580.0 917.0,592.0 926.5,598.0 936.1,601.5 945.7,606.0 955.2,612.0 964.8,612.0 974.4,607.0 984.0,592.0 993.5,587.5 1003.1,580.0 1012.7,576.3 1022.2,583.0 1031.8,597.0 1041.4,608.3 1043.0,608.3" fill="none" stroke="#8a10c8" stroke-width="1.1"/>
<polyline points="0.0,382.6 7.8,382.2 17.4,377.5 27.0,371.5 36.5,368.0 46.1,362.1 55.7,358.2 65.2,357.1 74.8,353.6 84.4,344.1 93.9,339.5 103.5,327.9 113.1,321.4 122.7,313.5 132.2,304.2 141.8,297.4 151.4,297.4 160.9,298.6 170.5,300.2 180.1,306.2 189.6,313.4 199.2,322.5 208.8,331.1 218.4,338.4 227.9,344.8 237.5,355.3 247.1,364.8 256.6,380.6 266.2,394.4 275.8,404.9 285.3,411.6 294.9,416.5 304.5,417.1 314.1,412.5 323.6,407.4 333.2,399.3 342.8,395.9 352.3,391.4 361.9,386.0 371.5,378.3 381.0,368.4 390.6,350.8 400.2,333.8 409.8,322.1 419.3,311.7 428.9,298.1 438.5,288.0 448.0,280.4 457.6,274.7 467.2,272.1 476.7,271.2 486.3,272.4 495.9,275.2 505.5,282.1 515.0,290.6 524.6,308.6 534.2,326.1 543.7,338.1 553.3,345.6 562.9,360.4 572.4,372.0 582.0,382.9 591.6,394.1 601.2,405.8 610.7,415.0 620.3,423.1 629.9,429.4 639.4,429.2 649.0,419.3 658.6,411.9 668.1,399.1 677.7,389.8 687.3,375.1 696.9,364.1 706.4,358.4 716.0,348.2 725.6,342.6 735.1,334.8 744.7,327.4 754.3,322.9 763.8,326.4 773.4,324.3 783.0,322.2 792.6,319.8 802.1,327.1 811.7,342.1 821.3,362.3 830.8,377.2 840.4,384.5 850.0,392.5 859.5,405.5 869.1,412.5 878.7,419.0 888.3,430.0 897.8,442.5 907.4,452.5 917.0,460.0 926.5,466.5 936.1,473.2 945.7,488.0 955.2,498.5 964.8,506.0 974.4,517.0 984.0,522.2 993.5,523.8 1003.1,527.0 1012.7,531.6 1022.2,534.5 1031.8,539.8 1041.4,543.4 1043.0,543.4" fill="none" stroke="#8a10c8" stroke-width="1.2" stroke-dasharray="11 12"/>
<polyline points="0.0,391.1 7.8,390.7 17.4,385.2 27.0,379.5 36.5,374.7 46.1,371.5 55.7,367.7 65.2,362.7 74.8,357.7 84.4,352.2 93.9,346.9 103.5,341.4 113.1,336.2 122.7,331.4 132.2,327.1 141.8,323.1 151.4,320.6 160.9,318.6 170.5,317.1 180.1,318.9 189.6,321.9 199.2,324.9 208.8,327.6 218.4,329.9 227.9,331.4 237.5,335.2 247.1,341.9 256.6,348.2 266.2,355.2 275.8,362.7 285.3,371.0 294.9,378.5 304.5,384.7 314.1,389.3 323.6,393.5 333.2,396.5 342.8,395.3 352.3,392.8 361.9,388.3 371.5,383.5 381.0,376.5 390.6,368.5 400.2,358.2 409.8,349.5 419.3,340.7 428.9,332.2 438.5,323.7 448.0,315.9 457.6,309.6 467.2,303.6 476.7,298.4 486.3,294.9 495.9,293.4 505.5,295.6 515.0,300.6 524.6,307.6 534.2,313.2 543.7,317.2 553.3,321.4 562.9,326.9 572.4,332.7 582.0,340.7 591.6,352.7 601.2,364.2 610.7,372.5 620.3,383.3 629.9,392.8 639.4,399.0 649.0,402.3 658.6,403.6 668.1,402.0 677.7,399.0 687.3,394.5 696.9,389.0 706.4,382.0 716.0,374.5 725.6,367.0 735.1,362.5 744.7,360.0 754.3,358.0 763.8,356.5 773.4,356.0 783.0,356.0 792.6,357.0 802.1,359.0 811.7,361.0 821.3,364.0 830.8,368.0 840.4,373.0 850.0,378.0 859.5,384.0 869.1,390.0 878.7,397.0 888.3,404.0 897.8,412.0 907.4,420.0 917.0,429.0 926.5,438.0 936.1,448.0 945.7,458.0 955.2,468.0 964.8,477.0 974.4,483.8 984.0,490.5 993.5,497.3 1003.1,504.0 1012.7,510.8 1022.2,517.5 1031.8,524.3 1041.4,531.8 1043.0,531.8" fill="none" stroke="#7878f0" stroke-width="1.1" stroke-dasharray="3.5 3"/>
<polyline points="0.0,424.9 7.8,424.6 17.4,420.8 27.0,417.1 36.5,413.8 46.1,410.6 55.7,408.3 65.2,406.6 74.8,404.1 84.4,400.3 93.9,396.5 103.5,393.5 113.1,391.8 122.7,388.5 132.2,384.8 141.8,383.0 151.4,383.0 160.9,384.0 170.5,386.0 180.1,388.5 189.6,391.5 199.2,393.0 208.8,393.5 218.4,392.5 227.9,390.5 237.5,388.0 247.1,385.0 256.6,382.3 266.2,380.0 275.8,377.8 285.3,375.3 294.9,372.3 304.5,370.0 314.1,367.4 323.6,366.2 333.2,364.7 342.8,363.2 352.3,361.9 361.9,360.4 371.5,357.0 381.0,353.2 390.6,350.0 400.2,347.2 409.8,344.7 419.3,343.0 428.9,341.4 438.5,339.7 448.0,337.2 457.6,334.7 467.2,332.7 476.7,331.4 486.3,331.9 495.9,332.7 505.5,333.7 515.0,335.2 524.6,337.9 534.2,340.0 543.7,341.7 553.3,343.5 562.9,346.5 572.4,349.0 582.0,351.5 591.6,354.5 601.2,358.0 610.7,362.2 620.3,366.0 629.9,369.2 639.4,370.3 649.0,368.5 658.6,366.5 668.1,364.0 677.7,361.7 687.3,359.5 696.9,357.0 706.4,354.5 716.0,352.0 725.6,349.7 735.1,345.3 744.7,344.1 754.3,343.1 763.8,343.0 773.4,343.0 783.0,344.0 792.6,345.0 802.1,346.5 811.7,348.0 821.3,350.0 830.8,352.0 840.4,354.5 850.0,357.0 859.5,360.5 869.1,364.0 878.7,368.0 888.3,372.0 897.8,377.0 907.4,382.0 917.0,387.5 926.5,393.0 936.1,399.0 945.7,405.0 955.2,410.5 964.8,415.5 974.4,418.0 984.0,420.8 993.5,423.0 1003.1,426.0 1012.7,428.5 1022.2,431.0 1031.8,434.0 1041.4,437.8 1043.0,437.8" fill="none" stroke="#8a1c1c" stroke-width="1.2" stroke-dasharray="3.5 3"/>
<text x="1358" y="111.5" font-size="10" text-anchor="end" fill="#f00000">R2 4H</text>
<text x="1358" y="186.5" font-size="10" text-anchor="end" fill="#f00000">mR2 J</text>
<text x="1358" y="224.8" font-size="10" text-anchor="end" fill="#f00000">mR2 4H</text>
<text x="1358" y="337" font-size="10" text-anchor="end" fill="#f00000">R1 4H</text>
<text x="1358" y="337" font-size="10" text-anchor="end" fill="#f00000">R1 J</text>
<text x="1358" y="396" font-size="10" text-anchor="end" fill="#f00000">mR1 4H</text>
<text x="1358" y="455" font-size="10" text-anchor="end" fill="#000">Piv 4H</text>
<text x="1358" y="568" font-size="10" text-anchor="end" fill="#0a8a0a">mS1 4H</text>
<text x="1358" y="568" font-size="10" text-anchor="end" fill="#f00000">mR1 H</text>
<line x1="961.5" y1="115" x2="1039.6" y2="115" stroke="#f00000" stroke-width="1"/>
<line x1="961.5" y1="190" x2="1039.6" y2="190" stroke="#f00000" stroke-width="1"/>
<line x1="961.5" y1="228" x2="1039.6" y2="228" stroke="#f00000" stroke-width="1"/>
<path d="M961.5,293 C1004.05,293 1000.05,340.5 1039.6,340.5" fill="none" stroke="#f00000" stroke-width="1.1"/>
<path d="M961.5,314 C1004.05,314 1000.05,340.5 1039.6,340.5" fill="none" stroke="#f00000" stroke-width="1.1"/>
<path d="M961.5,335 C1004.05,335 1000.05,399.5 1039.6,399.5" fill="none" stroke="#f00000" stroke-width="1.1"/>
<path d="M961.5,356 C1004.05,356 1000.05,437.8 1039.6,437.8" fill="none" stroke="#8a1c1c" stroke-width="1.1"/>
<path d="M961.5,377 C1004.05,377 1000.05,458 1039.6,458" fill="none" stroke="#000000" stroke-width="1.1"/>
<path d="M961.5,398 C1004.05,398 1000.05,478.5 1039.6,478.5" fill="none" stroke="#8000c0" stroke-width="1.1"/>
<path d="M961.5,419 C1004.05,419 1000.05,531.8 1039.6,531.8" fill="none" stroke="#7070f8" stroke-width="1.1"/>
<path d="M961.5,440 C1004.05,440 1000.05,543.3 1039.6,543.3" fill="none" stroke="#8000c0" stroke-width="1.1"/>
<path d="M961.5,482 C1004.05,482 1000.05,571.5 1039.6,571.5" fill="none" stroke="#f00000" stroke-width="1.1"/>
<path d="M961.5,503 C1004.05,503 1000.05,571.5 1039.6,571.5" fill="none" stroke="#f00000" stroke-width="1.1"/>
<path d="M961.5,629 C1004.05,629 1000.05,608.3 1039.6,608.3" fill="none" stroke="#8000c0" stroke-width="1.1"/>
<path d="M961.5,461 C1004.05,461 1000.05,571.5 1039.6,571.5" fill="none" stroke="#0a8a0a" stroke-width="1.1"/>
<path d="M961.5,560 C1004.05,560 1000.05,585 1039.6,585" fill="none" stroke="#a8acb0" stroke-width="1.1"/>
<circle cx="1042.3" cy="115" r="3.2" fill="#fff" stroke="#f00000" stroke-width="1.1"/>
<circle cx="1042.3" cy="190" r="3.2" fill="#fff" stroke="#f00000" stroke-width="1.1"/>
<circle cx="1042.3" cy="228" r="3.2" fill="#fff" stroke="#f00000" stroke-width="1.1"/>
<circle cx="1042.3" cy="340.5" r="3.2" fill="#fff" stroke="#f00000" stroke-width="1.1"/>
<circle cx="1042.3" cy="340.5" r="3.2" fill="#fff" stroke="#f00000" stroke-width="1.1"/>
<circle cx="1042.3" cy="399.5" r="3.2" fill="#fff" stroke="#f00000" stroke-width="1.1"/>
<circle cx="1042.3" cy="437.8" r="3.2" fill="#fff" stroke="#8a1c1c" stroke-width="1.1"/>
<circle cx="1042.3" cy="458" r="3.2" fill="#fff" stroke="#000000" stroke-width="1.1"/>
<circle cx="1042.3" cy="478.5" r="3.2" fill="#fff" stroke="#8000c0" stroke-width="1.1"/>
<circle cx="1042.3" cy="531.8" r="3.2" fill="#fff" stroke="#7070f8" stroke-width="1.1"/>
<circle cx="1042.3" cy="543.3" r="3.2" fill="#fff" stroke="#8000c0" stroke-width="1.1"/>
<circle cx="1042.3" cy="571.5" r="3.2" fill="#fff" stroke="#f00000" stroke-width="1.1"/>
<circle cx="1042.3" cy="571.5" r="3.2" fill="#fff" stroke="#f00000" stroke-width="1.1"/>
<circle cx="1042.3" cy="608.3" r="3.2" fill="#fff" stroke="#8000c0" stroke-width="1.1"/>
<circle cx="1042.3" cy="571.5" r="3.2" fill="#fff" stroke="#0a8a0a" stroke-width="1.1"/>
<circle cx="1042.3" cy="585" r="3.2" fill="#fff" stroke="#30d8ff" stroke-width="1.3"/>
<rect x="754.5" y="105.5" width="207" height="19" rx="3.5" fill="#ffffff" fill-opacity="0.83" stroke="#f00000" stroke-width="1.1"/>
<text x="757" y="119" fill="#f00000" textLength="79.5" lengthAdjust="spacingAndGlyphs">Res2 (4 heures)</text><text x="958" y="119" text-anchor="end" fill="#f00000" textLength="59.6" lengthAdjust="spacingAndGlyphs">5 246,86667</text>
<rect x="754.5" y="180.5" width="207" height="19" rx="3.5" fill="#ffffff" fill-opacity="0.83" stroke="#f00000" stroke-width="1.1"/>
<text x="757" y="194" fill="#f00000" textLength="87.4" lengthAdjust="spacingAndGlyphs">MidR2 (Journalier)</text><text x="958" y="194" text-anchor="end" fill="#f00000" textLength="59.6" lengthAdjust="spacingAndGlyphs">5 242,95000</text>
<rect x="754.5" y="218.5" width="207" height="19" rx="3.5" fill="#ffffff" fill-opacity="0.83" stroke="#f00000" stroke-width="1.1"/>
<text x="757" y="232" fill="#f00000" textLength="83.2" lengthAdjust="spacingAndGlyphs">MidR2 (4 heures)</text><text x="958" y="232" text-anchor="end" fill="#f00000" textLength="59.6" lengthAdjust="spacingAndGlyphs">5 240,95000</text>
<rect x="754.5" y="283.5" width="207" height="19" rx="3.5" fill="#ffffff" fill-opacity="0.83" stroke="#f00000" stroke-width="1.1"/>
<text x="757" y="297" fill="#f00000" textLength="83.2" lengthAdjust="spacingAndGlyphs">Res1 (Journalier)</text><text x="958" y="297" text-anchor="end" fill="#f00000" textLength="59.6" lengthAdjust="spacingAndGlyphs">5 235,06667</text>
<rect x="754.5" y="304.5" width="207" height="19" rx="3.5" fill="#ffffff" fill-opacity="0.83" stroke="#f00000" stroke-width="1.1"/>
<text x="757" y="318" fill="#f00000" textLength="79.5" lengthAdjust="spacingAndGlyphs">Res1 (4 heures)</text><text x="958" y="318" text-anchor="end" fill="#f00000" textLength="59.6" lengthAdjust="spacingAndGlyphs">5 235,03333</text>
<rect x="754.5" y="325.5" width="207" height="19" rx="3.5" fill="#ffffff" fill-opacity="0.83" stroke="#f00000" stroke-width="1.1"/>
<text x="757" y="339" fill="#f00000" textLength="83.2" lengthAdjust="spacingAndGlyphs">MidR1 (4 heures)</text><text x="958" y="339" text-anchor="end" fill="#f00000" textLength="59.6" lengthAdjust="spacingAndGlyphs">5 231,95000</text>
<rect x="754.5" y="346.5" width="207" height="19" rx="3.5" fill="#ffffff" fill-opacity="0.83" stroke="#8a1c1c" stroke-width="1.1"/>
<text x="757" y="360" fill="#8a1c1c" textLength="89.4" lengthAdjust="spacingAndGlyphs">Moyenne mobile50</text><text x="958" y="360" text-anchor="end" fill="#8a1c1c" textLength="59.6" lengthAdjust="spacingAndGlyphs">5 229,95200</text>
<rect x="754.5" y="367.5" width="207" height="19" rx="3.5" fill="#ffffff" fill-opacity="0.83" stroke="#000000" stroke-width="1.1"/>
<text x="757" y="381" fill="#000000" textLength="77.7" lengthAdjust="spacingAndGlyphs">Pivot (4 heures)</text><text x="958" y="381" text-anchor="end" fill="#000000" textLength="59.6" lengthAdjust="spacingAndGlyphs">5 228,86667</text>
<rect x="754.5" y="388.5" width="207" height="19" rx="3.5" fill="#ffffff" fill-opacity="0.83" stroke="#8000c0" stroke-width="1.1"/>
<text x="757" y="402" fill="#8000c0" textLength="79.0" lengthAdjust="spacingAndGlyphs">Boll sup (14,2.5)</text><text x="958" y="402" text-anchor="end" fill="#8000c0" textLength="59.6" lengthAdjust="spacingAndGlyphs">5 227,80943</text>
<rect x="754.5" y="409.5" width="207" height="19" rx="3.5" fill="#ffffff" fill-opacity="0.83" stroke="#7070f8" stroke-width="1.1"/>
<text x="757" y="423" fill="#7070f8" textLength="88.9" lengthAdjust="spacingAndGlyphs">Moyenne mobile20</text><text x="958" y="423" text-anchor="end" fill="#7070f8" textLength="59.6" lengthAdjust="spacingAndGlyphs">5 224,98500</text>
<rect x="754.5" y="430.5" width="207" height="19" rx="3.5" fill="#ffffff" fill-opacity="0.83" stroke="#8000c0" stroke-width="1.1"/>
<text x="757" y="444" fill="#8000c0" textLength="87.2" lengthAdjust="spacingAndGlyphs">Boll milieu (14,2.5)</text><text x="958" y="444" text-anchor="end" fill="#8000c0" textLength="59.6" lengthAdjust="spacingAndGlyphs">5 224,40714</text>
<rect x="754.5" y="451.5" width="207" height="19" rx="3.5" fill="#ffffff" fill-opacity="0.83" stroke="#0a8a0a" stroke-width="1.1"/>
<text x="757" y="465" fill="#0a8a0a" textLength="83.2" lengthAdjust="spacingAndGlyphs">MidS1 (4 heures)</text><text x="958" y="465" text-anchor="end" fill="#0a8a0a" textLength="59.6" lengthAdjust="spacingAndGlyphs">5 222,95000</text>
<rect x="754.5" y="472.5" width="207" height="19" rx="3.5" fill="#ffffff" fill-opacity="0.83" stroke="#f00000" stroke-width="1.1"/>
<text x="757" y="486" fill="#f00000" textLength="70.7" lengthAdjust="spacingAndGlyphs">MidR1 (Hebdo)</text><text x="958" y="486" text-anchor="end" fill="#f00000" textLength="59.6" lengthAdjust="spacingAndGlyphs">5 222,90000</text>
<rect x="754.5" y="493.5" width="207" height="19" rx="3.5" fill="#ffffff" fill-opacity="0.83" stroke="#f00000" stroke-width="1.1"/>
<text x="757" y="507" fill="#f00000" textLength="86.9" lengthAdjust="spacingAndGlyphs">MidR1 (Journalier)</text><text x="958" y="507" text-anchor="end" fill="#f00000" textLength="59.6" lengthAdjust="spacingAndGlyphs">5 222,90000</text>
<rect x="754.5" y="619.5" width="207" height="19" rx="3.5" fill="#ffffff" fill-opacity="0.83" stroke="#8000c0" stroke-width="1.1"/>
<text x="757" y="633" fill="#8000c0" textLength="72.6" lengthAdjust="spacingAndGlyphs">Boll inf (14,2.5)</text><text x="958" y="633" text-anchor="end" fill="#8000c0" textLength="59.6" lengthAdjust="spacingAndGlyphs">5 221,00485</text>
<rect x="754.5" y="514.5" width="207" height="103" rx="3.5" fill="#ebf0fb" fill-opacity="0.88" stroke="#a8acb0" stroke-width="1.1"/>
<text x="757" y="527.8" fill="#000" textLength="49.1" lengthAdjust="spacingAndGlyphs">Ouverture</text><text x="959" y="527.8" text-anchor="end" fill="#000" textLength="35.8" lengthAdjust="spacingAndGlyphs">5 221,7</text>
<text x="757" y="541.7" fill="#000" textLength="45.3" lengthAdjust="spacingAndGlyphs">Plus Haut</text><text x="959" y="541.7" text-anchor="end" fill="#000" textLength="35.8" lengthAdjust="spacingAndGlyphs">5 222,2</text>
<text x="757" y="555.6" fill="#000" textLength="41.8" lengthAdjust="spacingAndGlyphs">Plus Bas</text><text x="959" y="555.6" text-anchor="end" fill="#000" textLength="35.8" lengthAdjust="spacingAndGlyphs">5 221,7</text>
<text x="757" y="569.5" fill="#000" textLength="34.1" lengthAdjust="spacingAndGlyphs">Clôture</text><text x="959" y="569.5" text-anchor="end" fill="#000" textLength="35.8" lengthAdjust="spacingAndGlyphs">5 222,2</text>
<text x="757" y="583.4" fill="#000" textLength="107.8" lengthAdjust="spacingAndGlyphs">Diff. haut-bas (0,01%)</text><text x="959" y="583.4" text-anchor="end" fill="#000" textLength="21.2" lengthAdjust="spacingAndGlyphs">+0,5</text>
<text x="757" y="597.3" fill="#900000" textLength="145.8" lengthAdjust="spacingAndGlyphs">Var. / jour précédent (-0,16%)</text><text x="959" y="597.3" text-anchor="end" fill="#900000" textLength="18.5" lengthAdjust="spacingAndGlyphs">-8,4</text>
<text x="757" y="611.2" fill="#000a50" textLength="156.2" lengthAdjust="spacingAndGlyphs">Var. / barre précédente (0,01%)</text><text x="959" y="611.2" text-anchor="end" fill="#000a50" textLength="21.2" lengthAdjust="spacingAndGlyphs">+0,3</text>
<line x1="0" y1="548.5" x2="1450" y2="548.5" stroke="#f06060" stroke-width="1" opacity="0.75"/>
<line x1="1300.5" y1="92" x2="1300.5" y2="635" stroke="#f06060" stroke-width="1" opacity="0.75"/>
<text x="4" y="641.6" font-size="11" font-weight="bold" fill="#000">175 ticks</text>
</g>
<rect x="0" y="92" width="1450" height="1" fill="#9aa6ad"/><rect x="1" y="92" width="1.3" height="543" fill="#a7b2b9"/><rect x="0" y="92" width="1" height="543" fill="#f4f6f8"/>
<rect x="1.5" y="92.5" width="110" height="17" fill="url(#gtool)" stroke="#9fb0ba" stroke-width="1"/>
<text x="5.5" y="105" font-size="11" fill="#000820" textLength="17.3" lengthAdjust="spacingAndGlyphs">Prix</text>
<g transform="translate(26.8,93.8) scale(0.93)" fill="none" stroke-linecap="round" stroke-linejoin="round"><path d="M1.9,12.4 L7.9,6.5 M9.6,1.9 C7.4,2.9 6.6,5.2 7.9,6.6 C9.2,8 11.5,7.4 12.9,5.6" stroke="#000" stroke-width="3.9"/><path d="M1.9,12.4 L7.9,6.5 M9.6,1.9 C7.4,2.9 6.6,5.2 7.9,6.6 C9.2,8 11.5,7.4 12.9,5.6" stroke="#fff" stroke-width="1.7"/></g>
<rect x="44.6" y="95.3" width="12" height="11" rx="1.6" fill="#fff" stroke="#000" stroke-width="1.4"/><rect x="44.6" y="94.8" width="12" height="3" rx="1" fill="#000"/>
<circle cx="67.5" cy="100.8" r="6.4" fill="#333"/><path d="M64.9,98.2 l5.2,5.2 M70.1,98.2 l-5.2,5.2" stroke="#fff" stroke-width="2"/>
<path d="M78.3,94.6 h8.6 l3.4,3.4 v8.4 h-12 z" fill="#fff" stroke="#c29a8a" stroke-width="1.3"/><path d="M86.9,94.6 v3.4 h3.4" fill="none" stroke="#c29a8a" stroke-width="1"/><path d="M82.8,97 h2.2 v3 h3 l-4.1,3.9 l-4.1,-3.9 h3 z" fill="#f01818"/><path d="M81.7,102.6 l2.2,1.6 l2.2,-1.6 z" fill="#d020e0" opacity="0.8"/>
<path d="M95.3,94.6 h8.6 l3.4,3.4 v8.4 h-12 z" fill="#fff" stroke="#c29a8a" stroke-width="1.3"/><path d="M103.9,94.6 v3.4 h3.4" fill="none" stroke="#c29a8a" stroke-width="1"/><path d="M100.9,97 l4.1,3.9 h-3 v3.5 h-2.2 v-3.5 h-3 z" fill="#1040c8"/>
<text x="116" y="105" font-size="11" fill="#000" textLength="161.6" lengthAdjust="spacingAndGlyphs">Jour :+Haut 5 242,7 +Bas 5 219,0</text>
</svg></body></html>
